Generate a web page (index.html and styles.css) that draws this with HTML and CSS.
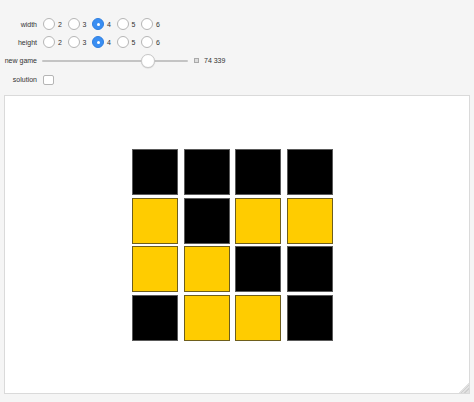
FILE: index.html
```html
<!DOCTYPE html>
<html>
<head>
<meta charset="utf-8">
<link rel="stylesheet" href="styles.css">
</head>
<body>
<div class="controls">
  <div class="row">
    <div class="label">width</div>
    <div class="radios">
      <div class="opt"><span class="radio"></span><span class="num">2</span></div>
      <div class="opt"><span class="radio"></span><span class="num">3</span></div>
      <div class="opt"><span class="radio on"></span><span class="num">4</span></div>
      <div class="opt"><span class="radio"></span><span class="num">5</span></div>
      <div class="opt"><span class="radio"></span><span class="num">6</span></div>
    </div>
  </div>
  <div class="row">
    <div class="label">height</div>
    <div class="radios">
      <div class="opt"><span class="radio"></span><span class="num">2</span></div>
      <div class="opt"><span class="radio"></span><span class="num">3</span></div>
      <div class="opt"><span class="radio on"></span><span class="num">4</span></div>
      <div class="opt"><span class="radio"></span><span class="num">5</span></div>
      <div class="opt"><span class="radio"></span><span class="num">6</span></div>
    </div>
  </div>
  <div class="row slider-row">
    <div class="label">new game</div>
    <div class="slider">
      <div class="track"></div>
      <div class="thumb"></div>
    </div>
    <span class="plus"></span>
    <span class="value">74 339</span>
  </div>
  <div class="row check-row">
    <div class="label">solution</div>
    <span class="checkbox"></span>
  </div>
</div>
<div class="panel">
  <div class="grid">
    <div class="cell b"></div><div class="cell b"></div><div class="cell b"></div><div class="cell b"></div>
    <div class="cell y"></div><div class="cell b"></div><div class="cell y"></div><div class="cell y"></div>
    <div class="cell y"></div><div class="cell y"></div><div class="cell b"></div><div class="cell b"></div>
    <div class="cell b"></div><div class="cell y"></div><div class="cell y"></div><div class="cell b"></div>
  </div>
  <div class="grip"></div>
</div>
</body>
</html>
```
FILE: styles.css
```css
html, body {
  margin: 0;
  padding: 0;
}
body {
  width: 474px;
  height: 402px;
  background: #f5f5f5;
  font-family: "Liberation Sans", Arial, sans-serif;
  font-size: 7px;
  color: #333;
  overflow: hidden;
}
.controls {
  padding-top: 15px;
}
.row {
  display: flex;
  align-items: center;
  height: 18px;
}
.slider-row, .check-row {
  height: 19px;
}
.label {
  width: 37px;
  text-align: right;
  margin-right: 6px;
  flex: none;
}
.radios {
  display: flex;
}
.opt {
  width: 24.5px;
  display: flex;
  align-items: center;
}
.radio {
  width: 12px;
  height: 12px;
  box-sizing: border-box;
  border: 1px solid #b5b5b5;
  border-radius: 50%;
  background: #fff;
  margin-right: 3px;
  flex: none;
}
.radio.on {
  background: #3a8ef2;
  border-color: #2f7fe0;
  position: relative;
}
.radio.on::after {
  content: "";
  position: absolute;
  left: 3.5px;
  top: 3.5px;
  width: 3px;
  height: 3px;
  border-radius: 50%;
  background: #fff;
}
.slider {
  position: relative;
  width: 146px;
  height: 14px;
  margin-left: -1px;
}
.track {
  position: absolute;
  left: 0;
  right: 0;
  top: 6px;
  height: 2px;
  background: #c4c4c4;
  border-radius: 1px;
}
.thumb {
  position: absolute;
  left: 99px;
  top: 0;
  width: 14px;
  height: 14px;
  box-sizing: border-box;
  border-radius: 50%;
  background: #fff;
  border: 1px solid #c8c8c8;
  box-shadow: 0 0.5px 1px rgba(0,0,0,0.15);
}
.plus {
  width: 5px;
  height: 5px;
  box-sizing: border-box;
  border: 1px solid #aaa;
  background: #ddd;
  margin-left: 6px;
  margin-right: 5px;
}
.value {
  color: #333;
}
.checkbox {
  width: 11px;
  height: 10px;
  box-sizing: border-box;
  border: 1px solid #b5b5b5;
  border-radius: 2px;
  background: #fff;
}
.panel {
  position: relative;
  margin: 6px 0 0 4px;
  width: 466px;
  height: 299px;
  box-sizing: border-box;
  background: #fff;
  border: 1px solid #dadada;
}
.grid {
  display: grid;
  grid-template-columns: repeat(4, 46px);
  grid-template-rows: repeat(4, 46px);
  column-gap: 5.5px;
  row-gap: 2.5px;
  margin-left: 127px;
  padding-top: 53px;
}
.cell {
  box-sizing: border-box;
  border: 1px solid #5a5a5a;
}
.cell.b {
  background: #000;
}
.cell.y {
  background: #ffcc00;
  border-color: #6e5e1c;
}
.grip {
  position: absolute;
  right: 0;
  bottom: 0;
  width: 11px;
  height: 11px;
  background: linear-gradient(135deg, transparent 50%, #e2e2e2 50%, #e2e2e2 60%, #cfcfcf 60%, #cfcfcf 66%, #e2e2e2 66%, #e2e2e2 76%, #cfcfcf 76%, #cfcfcf 82%, #e2e2e2 82%);
}
```
